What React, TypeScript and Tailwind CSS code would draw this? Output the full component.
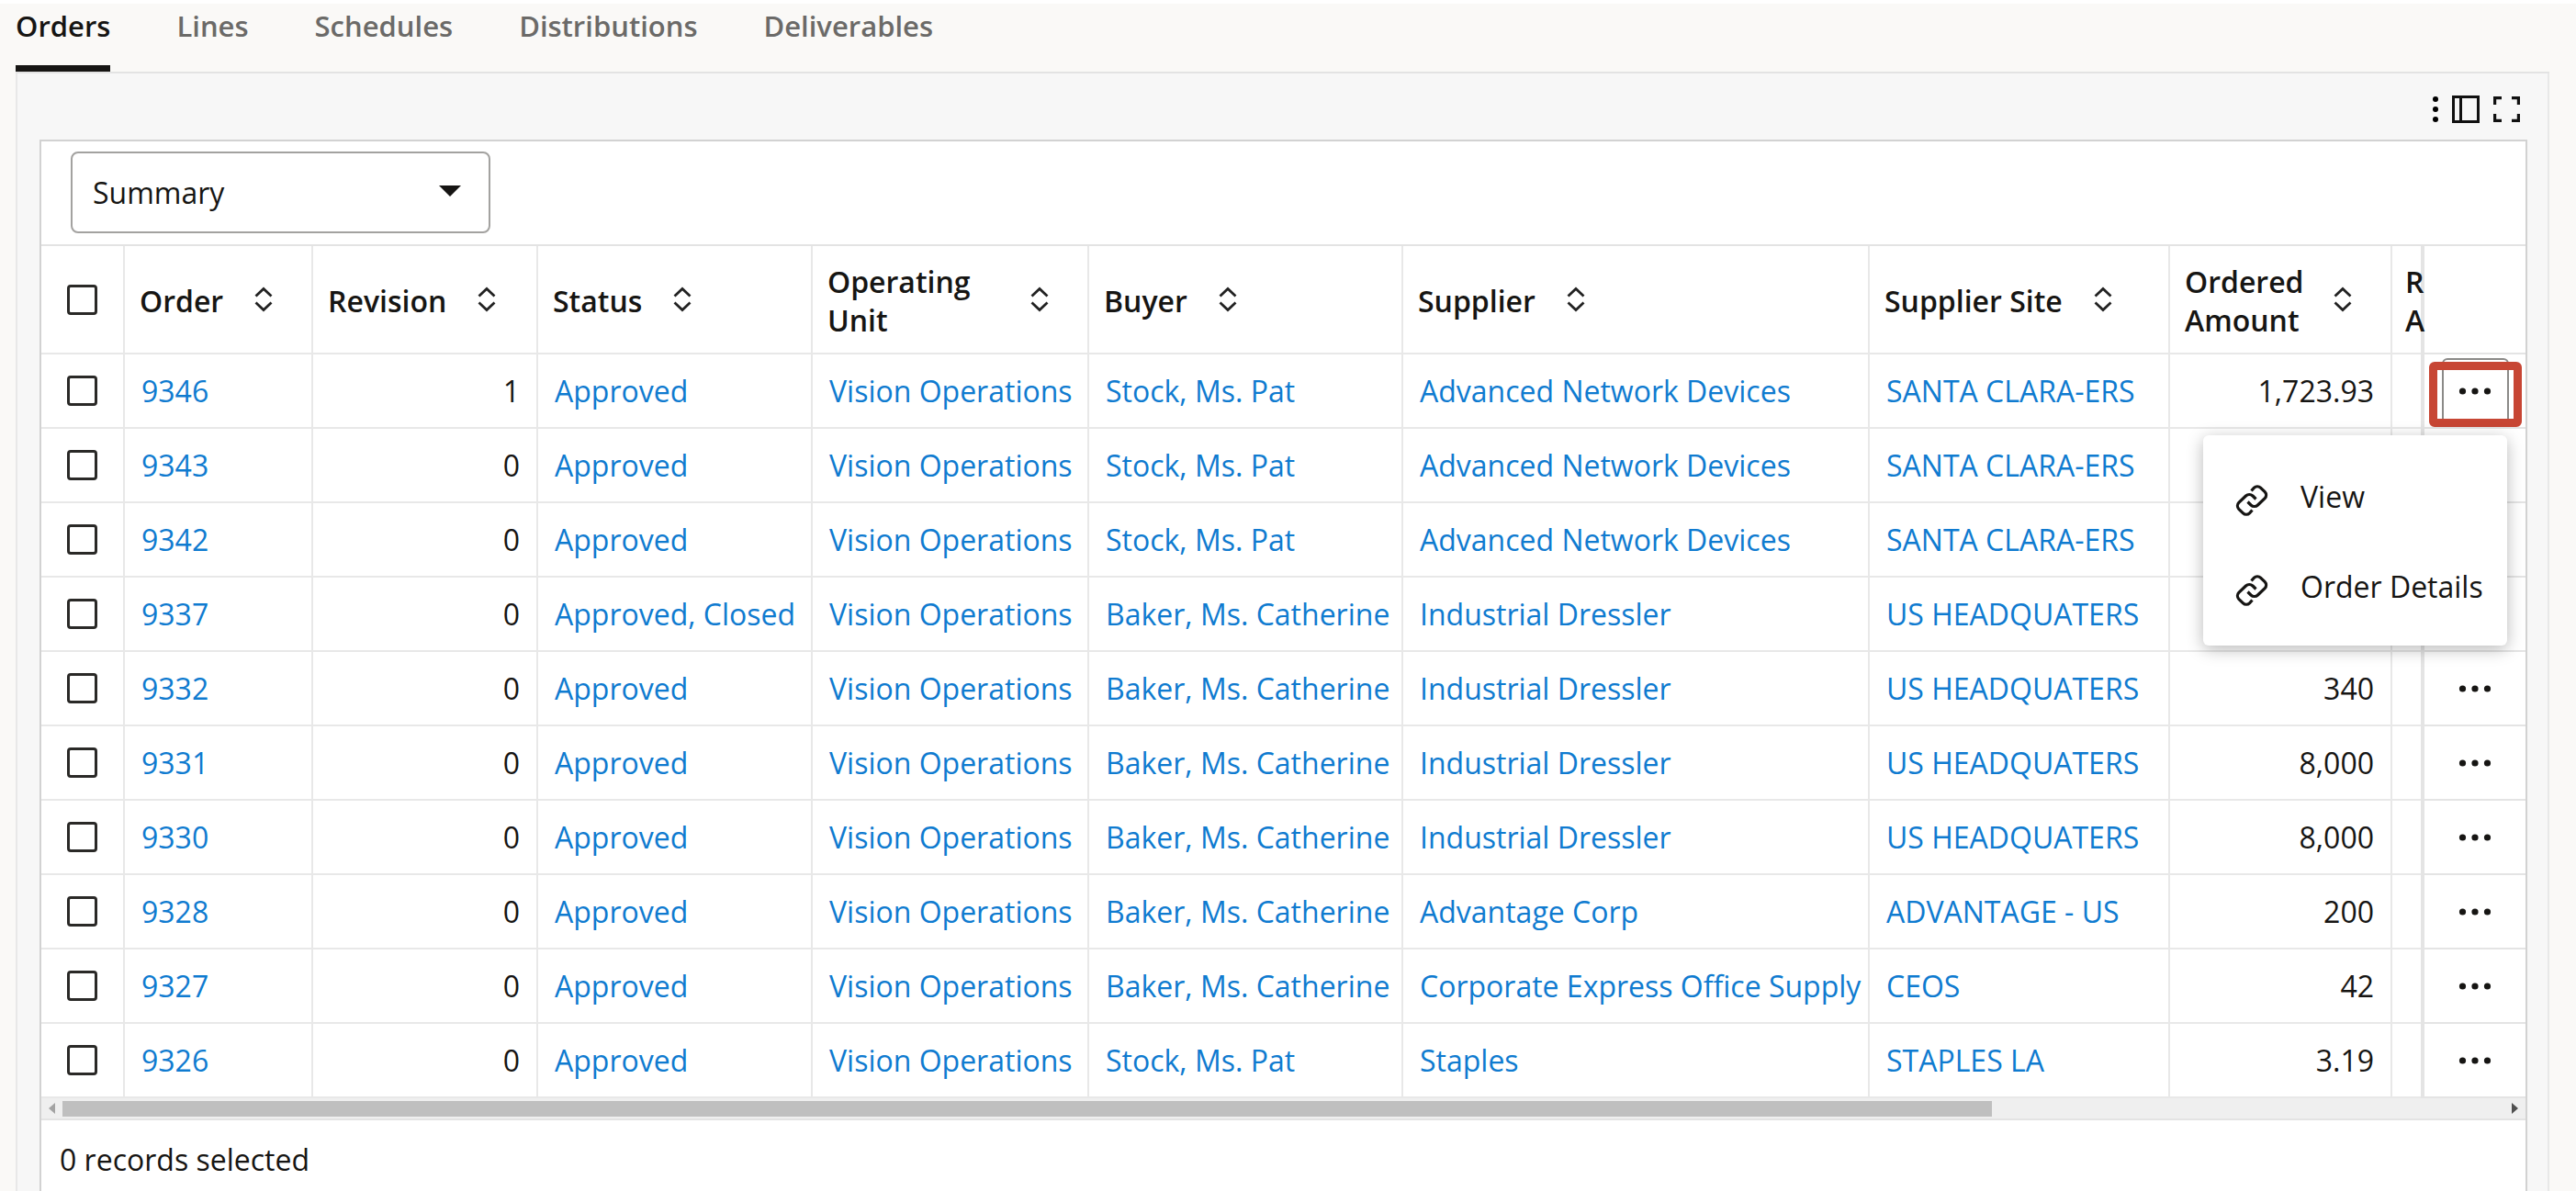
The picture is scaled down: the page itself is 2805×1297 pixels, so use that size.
import React from "react";

type Order = {
  id: string;
  revision: number;
  status: string;
  buyer: string;
  supplier: string;
  site: string;
  amount: string;
};

const PAT = "Stock, Ms. Pat";
const CATHERINE = "Baker, Ms. Catherine";

const orders: Order[] = [
  { id: "9346", revision: 1, status: "Approved", buyer: PAT, supplier: "Advanced Network Devices", site: "SANTA CLARA-ERS", amount: "1,723.93" },
  { id: "9343", revision: 0, status: "Approved", buyer: PAT, supplier: "Advanced Network Devices", site: "SANTA CLARA-ERS", amount: "" },
  { id: "9342", revision: 0, status: "Approved", buyer: PAT, supplier: "Advanced Network Devices", site: "SANTA CLARA-ERS", amount: "" },
  { id: "9337", revision: 0, status: "Approved, Closed", buyer: CATHERINE, supplier: "Industrial Dressler", site: "US HEADQUATERS", amount: "" },
  { id: "9332", revision: 0, status: "Approved", buyer: CATHERINE, supplier: "Industrial Dressler", site: "US HEADQUATERS", amount: "340" },
  { id: "9331", revision: 0, status: "Approved", buyer: CATHERINE, supplier: "Industrial Dressler", site: "US HEADQUATERS", amount: "8,000" },
  { id: "9330", revision: 0, status: "Approved", buyer: CATHERINE, supplier: "Industrial Dressler", site: "US HEADQUATERS", amount: "8,000" },
  { id: "9328", revision: 0, status: "Approved", buyer: CATHERINE, supplier: "Advantage Corp", site: "ADVANTAGE - US", amount: "200" },
  { id: "9327", revision: 0, status: "Approved", buyer: CATHERINE, supplier: "Corporate Express Office Supply", site: "CEOS", amount: "42" },
  { id: "9326", revision: 0, status: "Approved", buyer: PAT, supplier: "Staples", site: "STAPLES LA", amount: "3.19" },
];

const tabs = ["Orders", "Lines", "Schedules", "Distributions", "Deliverables"];

function SortIcon() {
  return (
    <svg width="20" height="28" viewBox="0 0 20 28" fill="none" stroke="#222" strokeWidth="2.8" aria-hidden="true">
      <path d="M1.5 10.500 10 2.500l8.5 8M1.5 17.500l8.5 8 8.5-8" />
    </svg>
  );
}

function Dots() {
  return (
    <svg width="36" height="8" viewBox="0 0 36 8" fill="#161513" aria-hidden="true">
      <circle cx="4.5" cy="4" r="3.6" />
      <circle cx="18" cy="4" r="3.6" />
      <circle cx="31.5" cy="4" r="3.6" />
    </svg>
  );
}

function LinkIcon() {
  return (
    <svg width="36" height="36" viewBox="0 0 36 36" fill="none" stroke="#161513" strokeWidth="3.2" aria-hidden="true">
      <path d="M17.500 7.500 20.500 4.200A5 5 0 0 1 27.500 4.200L32.200 8.700A5 5 0 0 1 32.200 15.600L24.500 23A5.500 5.500 0 0 1 17 23L13.500 19.500" />
      <path d="M18.500 28.500 15.500 31.800A5 5 0 0 1 8.500 31.800L3.800 27.300A5 5 0 0 1 3.800 20.400L11.500 13A5.500 5.500 0 0 1 19 13L22.500 16.500" />
    </svg>
  );
}

function Checkbox({ label }: { label: string }) {
  return (
    <input
      type="checkbox"
      aria-label={label}
      className="mx-auto block size-[33px] appearance-none rounded border-3 border-[#2a2927] bg-white"
    />
  );
}

function Heading({ text, split }: { text: string; split?: boolean }) {
  return (
    <th scope="col" className="border-r-2 border-b-2 border-[#e8e8e8] px-4 pt-[3px] pb-0 text-left font-semibold">
      <div className={split ? "flex items-center justify-between pr-[26px]" : "flex items-center gap-[34px]"}>
        <span className={split ? "w-[160px]" : "whitespace-nowrap"}>{text}</span>
        <button aria-label={"Sort by " + text} className="-mt-1">
          <SortIcon />
        </button>
      </div>
    </th>
  );
}

function Cell({ children, right }: { children?: React.ReactNode; right?: boolean }) {
  return (
    <td
      className={
        right
          ? "border-r-2 border-b-2 border-[#e8e8e8] px-[18px] text-right whitespace-nowrap"
          : "border-r-2 border-b-2 border-[#e8e8e8] px-[18px] whitespace-nowrap"
      }
    >
      {children}
    </td>
  );
}

function CellLink({ text }: { text: string }) {
  return (
    <Cell>
      <a href="#" className="text-[#0f7bd0]">
        {text}
      </a>
    </Cell>
  );
}

function RowMenu() {
  return (
    <div
      role="menu"
      className="absolute top-[88px] right-5 z-20 flex w-[331px] flex-col rounded-md bg-white pt-[18px] pb-[15px] shadow-[0_4px_18px_rgba(0,0,0,0.28)]"
    >
      {["View", "Order Details"].map((item) => (
        <button key={item} role="menuitem" className="flex h-[98px] items-center gap-[35px] pl-[35px]">
          <span className="pt-2">
            <LinkIcon />
          </span>
          <span className="whitespace-nowrap">{item}</span>
        </button>
      ))}
    </div>
  );
}

function ActionCell({ open, id }: { open: boolean; id: string }) {
  return (
    <td className="relative border-b-2 border-l-4 border-[#e4e4e4] bg-white p-0">
      <button
        aria-label={"Actions for order " + id}
        className={
          open
            ? "mx-auto flex h-[72px] w-[73px] items-center justify-center rounded-md border-2 border-[#8b8a88]"
            : "mx-auto flex h-[72px] w-[73px] items-center justify-center"
        }
      >
        <Dots />
      </button>
      {open && <div className="pointer-events-none absolute top-2 right-1 left-[5px] h-[71px] rounded-md border-[9px] border-[#c74634]" />}
      {open && <RowMenu />}
    </td>
  );
}

export default function App() {
  return (
    <div className="min-h-screen overflow-hidden border-t-4 border-white bg-[#faf9f7] font-['Open_Sans',sans-serif] text-[32px] leading-[42px] text-[#161513]">
      <div role="tablist" className="ml-[17px] mr-[29px] flex h-[76px] items-stretch gap-[72px] border-b-2 border-[#e3e3e3] text-[31px]">
        {tabs.map((tab, i) => (
          <button
            key={tab}
            role="tab"
            aria-selected={i === 0}
            className={
              i === 0
                ? "flex items-start border-b-7 border-[#161513] pt-[3px] font-semibold"
                : "flex items-start pt-[3px] font-semibold text-[#6b6a68]"
            }
          >
            {tab}
          </button>
        ))}
      </div>

      <main className="ml-[17px] mr-[29px] border-x-2 border-[#e8e8e8] bg-[#f7f7f7] pr-[22px] pl-6">
        <div className="flex h-[72px] items-center justify-end gap-[15px] pr-2 pt-[6px]">
          <button aria-label="More">
            <svg width="6" height="30" viewBox="0 0 6 30" fill="#000">
              <circle cx="3" cy="4" r="3" />
              <circle cx="3" cy="15" r="3" />
              <circle cx="3" cy="26" r="3" />
            </svg>
          </button>
          <button aria-label="Columns">
            <svg width="30" height="30" viewBox="0 0 30 30" fill="none" stroke="#111" strokeWidth="3">
              <path d="M1.500 1.500h27v27h-27zM9.500 1.500v27" />
            </svg>
          </button>
          <button aria-label="Full screen">
            <svg width="29" height="28" viewBox="0 0 29 28" fill="none" stroke="#111" strokeWidth="3.200">
              <path d="M9 1.600H1.600V9M20 1.600h7.400V9M9 26.400H1.600V19M20 26.400h7.400V19" />
            </svg>
          </button>
        </div>

        <section className="border-x-2 border-t-2 border-[#d2d2d2] bg-white">
          <div className="relative ml-8 mt-[11px] mb-3 h-[89px] w-[457px]">
            <select
              aria-label="View"
              className="h-full w-full appearance-none rounded-lg border-2 border-[#a3a2a0] bg-white px-[22px]"
            >
              <option>Summary</option>
            </select>
            <svg width="24" height="12" viewBox="0 0 24 12" className="pointer-events-none absolute top-[37px] right-8" aria-hidden="true">
              <path d="M0 0h24L12 12z" fill="#161513" />
            </svg>
          </div>

          <table className="w-full table-fixed border-separate border-spacing-0 border-t-2 border-[#e3e3e3]">
            <colgroup>
              <col className="w-[91px]" />
              <col className="w-[205px]" />
              <col className="w-[245px]" />
              <col className="w-[299px]" />
              <col className="w-[301px]" />
              <col className="w-[342px]" />
              <col />
              <col className="w-[327px]" />
              <col className="w-[242px]" />
              <col className="w-[31px]" />
              <col className="w-[114px]" />
            </colgroup>
            <thead>
              <tr className="h-[118px]">
                <th className="border-r-2 border-b-2 border-[#e8e8e8] p-0">
                  <Checkbox label="Select all" />
                </th>
                <Heading text="Order" />
                <Heading text="Revision" />
                <Heading text="Status" />
                <Heading text="Operating Unit" split />
                <Heading text="Buyer" />
                <Heading text="Supplier" />
                <Heading text="Supplier Site" />
                <Heading text="Ordered Amount" split />
                <th className="border-b-2 border-[#e8e8e8] p-0 pt-[3px] pl-[14px] text-left font-semibold">
                  R<br />A
                </th>
                <th className="border-b-2 border-l-4 border-[#e4e4e4] p-0" />
              </tr>
            </thead>
            <tbody>
              {orders.map((o, i) => (
                <tr key={o.id} className="h-[81px]">
                  <td className="border-r-2 border-b-2 border-[#e8e8e8] p-0">
                    <Checkbox label={"Select order " + o.id} />
                  </td>
                  <CellLink text={o.id} />
                  <Cell right>{o.revision}</Cell>
                  <CellLink text={o.status} />
                  <CellLink text="Vision Operations" />
                  <CellLink text={o.buyer} />
                  <CellLink text={o.supplier} />
                  <CellLink text={o.site} />
                  <Cell right>{o.amount}</Cell>
                  <td className="border-b-2 border-[#e8e8e8] p-0" />
                  <ActionCell open={i === 0} id={o.id} />
                </tr>
              ))}
            </tbody>
          </table>

          <div className="flex h-6 items-center justify-between border-b-2 border-[#e3e3e3] bg-[#efefef] px-2">
            <svg width="7" height="12" viewBox="0 0 7 12" aria-hidden="true">
              <path d="M7 0v12L0 6z" fill="#a3a3a3" />
            </svg>
            <div className="mx-2 h-[17px] flex-1">
              <div className="h-full w-[79%] bg-[#bfbfbf]" />
            </div>
            <svg width="7" height="12" viewBox="0 0 7 12" aria-hidden="true">
              <path d="M0 0v12l7-6z" fill="#505050" />
            </svg>
          </div>

          <p className="px-5 pt-[22px] pb-4">0 records selected</p>
        </section>
      </main>
    </div>
  );
}
